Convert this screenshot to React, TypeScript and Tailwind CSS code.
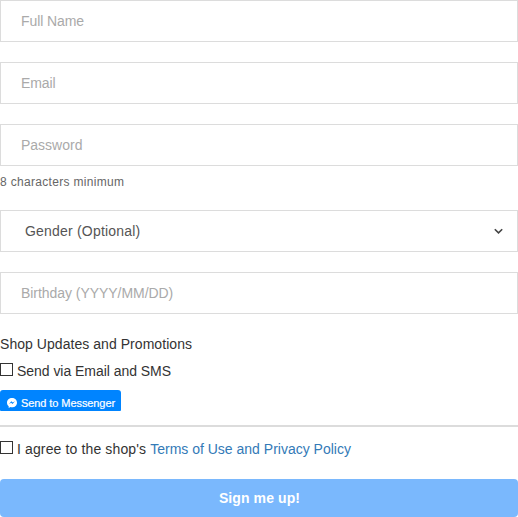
import React from "react";

function Field({ label, type = "text", tracking = "" }: { label: string; type?: string; tracking?: string }) {
  return (
    <input
      type={type}
      placeholder={label}
      className={`block h-[42px] w-full border border-[#dcdcdc] bg-white px-5 text-sm placeholder:text-[#aaaaaa] outline-none ${tracking}`}
    />
  );
}

function Check({ children }: { children: React.ReactNode }) {
  return (
    <label className="flex h-5 items-center text-sm">
      <input
        type="checkbox"
        className="mr-1 mb-[3px] size-[13px] shrink-0 appearance-none border border-[#333333] bg-white"
      />
      <span className="whitespace-nowrap">{children}</span>
    </label>
  );
}

export default function App() {
  return (
    <form className="flex h-[517px] w-full flex-col overflow-hidden bg-white font-['Liberation_Sans',Arial,sans-serif] text-sm text-[#333333]">
      <div className="flex flex-col gap-5">
        <Field label="Full Name" tracking="tracking-[-0.1px]" />
        <Field label="Email" tracking="tracking-[-0.1px]" />
        <Field label="Password" type="password" />
      </div>
      <p className="mt-2 mb-5 h-4 text-xs leading-4 text-[#666666]">
        <span className="tracking-[0.32px]">8 characters minimum</span>
      </p>
      <button type="button" className="flex h-[42px] w-full shrink-0 items-center justify-between border border-[#dcdcdc] bg-white pr-[14px] pl-6 text-sm text-[#555555]">
        <span className="tracking-[0.2px]">Gender (Optional)</span>
        <svg width="9" height="7" viewBox="0 0 9 7" fill="none" stroke="#444444" strokeWidth="1.6">
          <path d="M0.8 1.2 4.5 4.9 8.2 1.2" />
        </svg>
      </button>
      <div className="mt-5">
        <Field label="Birthday (YYYY/MM/DD)" tracking="tracking-[-0.05px]" />
      </div>
      <p className="mt-5 mb-[7px] h-5 leading-5">
        <span className="tracking-[0.05px]">Shop Updates and Promotions</span>
      </p>
      <Check><span className="tracking-[-0.04px]">Send via Email and SMS</span></Check>
      <button type="button" className="mt-[9px] flex h-[21px] w-[121px] shrink-0 items-center rounded-t-[3px] rounded-b-[1px] bg-[#0084ff] pt-[5px] pl-[7px] text-[11px] text-white">
        <svg className="mr-1 shrink-0" width="10" height="10" viewBox="0 0 10 10">
          <path fill="white" d="M5 0C2.2 0 0 2 0 4.65 0 6.1.65 7.3 1.7 8.15V10l1.7-.9c.5.14 1 .2 1.6.2 2.8 0 5-2 5-4.65S7.8 0 5 0Z" />
          <path fill="#0084ff" d="M1.9 6 4.4 3.3 5.7 4.6 8 3.3 5.5 6 4.2 4.7Z" />
        </svg>
        <span className="whitespace-nowrap pt-[2px] tracking-[-0.08px] [-webkit-text-stroke:0.2px_white]">Send to Messenger</span>
      </button>
      <hr className="mt-[14px] border-0 bg-[#dcdcdc] h-0.5 shrink-0" />
      <div className="mt-3">
        <Check>
          <span className="tracking-[0.13px]">I agree to the shop's </span>
          <a className="text-[#337ab7]">Terms of Use and Privacy Policy</a>
        </Check>
      </div>
      <button type="submit" className="mt-5 h-[38px] w-full shrink-0 rounded-[4px] bg-[#7ab8fd] pl-px text-sm font-bold text-white">
        <span className="tracking-[0.1px]">Sign me up!</span>
      </button>
    </form>
  );
}
